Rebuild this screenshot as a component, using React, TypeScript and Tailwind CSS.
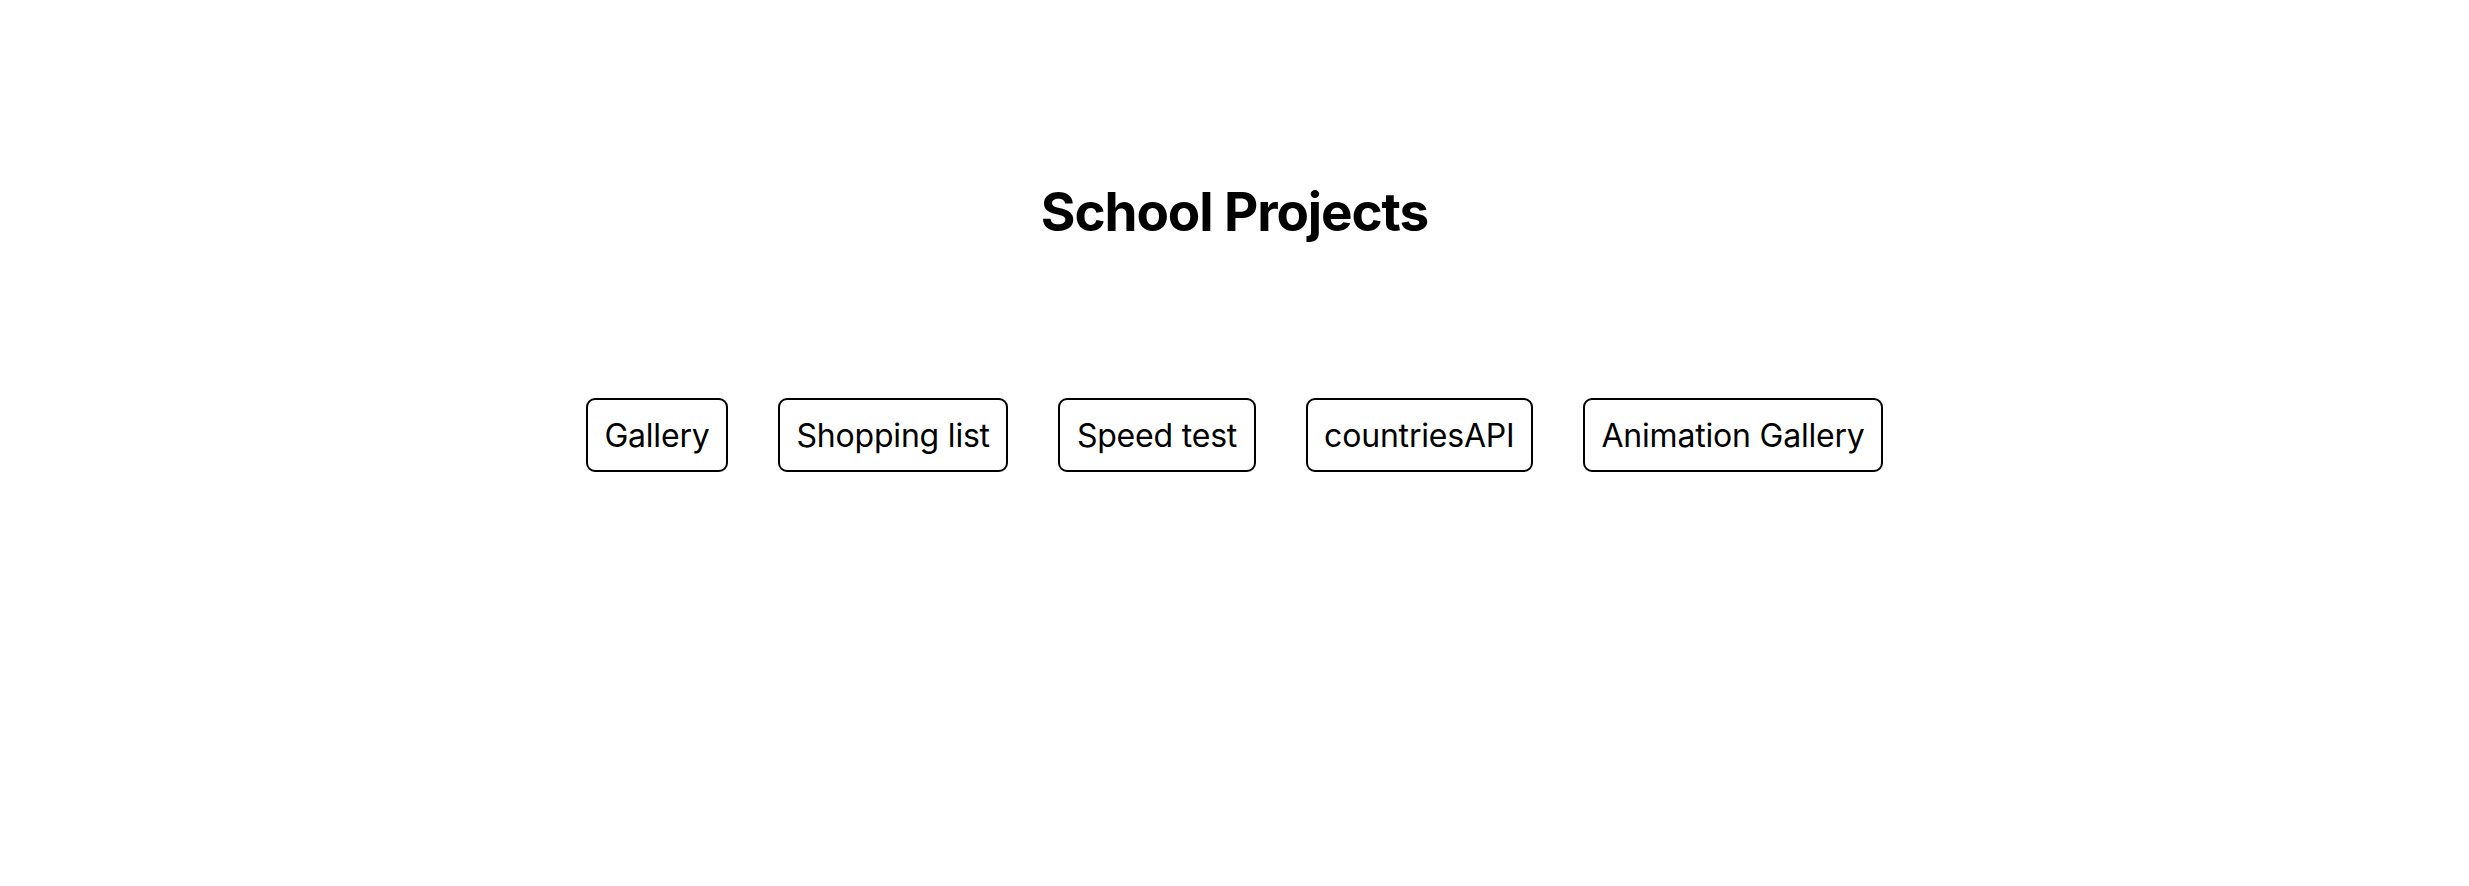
const projects = ["Gallery", "Shopping list", "Speed test", "countriesAPI", "Animation Gallery"];

export default function App() {
  return (
    <div className="min-h-screen bg-white text-black font-['Inter','Liberation_Sans',sans-serif]">
      <div className="flex flex-col items-center pt-[180px]">
        <h1 className="text-[53px] font-bold leading-[65px] tracking-[-1.1px]">School Projects</h1>
        <div className="mt-[153px] flex flex-row gap-[50px]">
          {projects.map((name) => (
            <button
              key={name}
              className="rounded-[9px] border-2 border-black bg-white px-[16.5px] py-[15.5px] text-[32px] leading-[39px] tracking-[-0.2px] text-black"
            >
              {name}
            </button>
          ))}
        </div>
      </div>
    </div>
  );
}
